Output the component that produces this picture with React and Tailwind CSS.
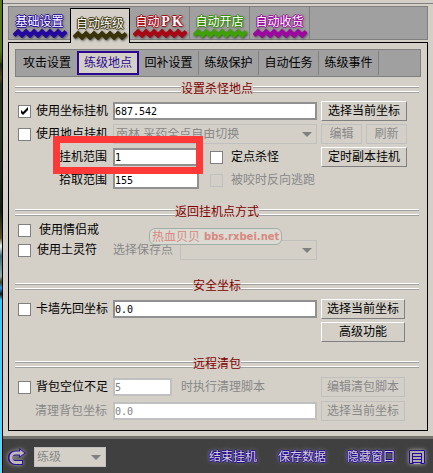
import { clsx } from 'clsx';

const mainTabs = [
  { name: '基础设置', color: 'text-[#2408a0]', outline: '[text-shadow:0_0_1px_#2408a0,1px_0_0_#2408a0,-1px_0_0_#2408a0,0_1px_0_#2408a0,0_-1px_0_#2408a0,1px_1px_3px_#303030]' },
  { name: '自动练级', color: 'text-[#3a3208]', outline: '[text-shadow:0_0_1px_#3a3208,1px_0_0_#3a3208,-1px_0_0_#3a3208,0_1px_0_#3a3208,0_-1px_0_#3a3208,1px_1px_3px_#606060]' },
  { name: '自动', letters: ['P', 'K'], color: 'text-[#a80814]', outline: '[text-shadow:0_0_1px_#a80814,1px_0_0_#a80814,-1px_0_0_#a80814,0_1px_0_#a80814,0_-1px_0_#a80814,1px_1px_3px_#303030]' },
  { name: '自动开店', color: 'text-[#40a008]', outline: '[text-shadow:0_0_1px_#389008,1px_0_0_#389008,-1px_0_0_#389008,0_1px_0_#389008,0_-1px_0_#389008,1px_1px_3px_#303030]' },
  { name: '自动收货', color: 'text-[#9c08a0]', outline: '[text-shadow:0_0_1px_#9c08a0,1px_0_0_#9c08a0,-1px_0_0_#9c08a0,0_1px_0_#9c08a0,0_-1px_0_#9c08a0,1px_1px_3px_#303030]' },
];

const subTabs = ['攻击设置', '练级地点', '回补设置', '练级保护', '自动任务', '练级事件'];

const footerLinks = ['结束挂机', '保存数据', '隐藏窗口'];

export default function App() {
  return (
    <div className="flex min-h-screen bg-[#d4d0c8] font-['Liberation_Sans','Noto_Sans_CJK_SC',sans-serif] text-xs leading-3 text-black">
      <GameEdge />
      <main className="flex min-w-0 flex-1 flex-col border-l border-black">
        <div className="h-1 border-b border-[#808080]" />
        <div className="px-[5px] pt-0.5">
          <MainTabs />
          <div className="mt-0.5 border border-black px-1.5 pt-1.5 pb-[9px]">
            <SubTabs />
            <HuntingSection />
            <ReturnSection />
            <SafeSection />
            <CleanSection />
          </div>
        </div>
        <Footer />
      </main>
    </div>
  );
}

// sliver of the game world left of the window
const GameEdge = () => (
  <aside className="w-0.5 shrink-0 bg-[linear-gradient(#5a7818_0px,#5a7818_50px,#3c5010_62px,#202818_64px,#504820_78px,#283018_84px,#283820_130px,#141c10_210px,#5a5020_238px,#e8f0f0_246px,#386870_256px,#90b0b0_276px,#403c18_282px,#28a0e8_288px,#101010_294px,#38c8f8_300px,#60d8f8_100%)]" />
);

const MainTabs = () => (
  <nav className="flex h-[34px] items-stretch border border-[#808080] bg-[#a0a0a0]">
    {mainTabs.map((tab, index) => (
      <button
        key={tab.name + index}
        className={clsx(
          'flex flex-col items-center pt-[9px]',
          index === 0 && 'w-[61px]',
          index === 1 && 'relative -mb-1 mt-px h-[35px] w-[60px] border-x border-t border-black bg-[#d4d0c8]',
          index > 1 && 'w-[60px] border-r border-[#808080]'
        )}
      >
        <span className={clsx('flex h-3 items-center text-white', tab.outline)}>
          {tab.name}
          {tab.letters?.map((letter) => (
            <b key={letter} className="w-3 text-center font-['Liberation_Serif',serif] text-sm leading-3">
              {letter}
            </b>
          ))}
        </span>
        <Zigzag className={tab.color} />
      </button>
    ))}
  </nav>
);

const Zigzag = ({ className }) => (
  <svg
    width="54"
    height="10"
    viewBox="0 0 54 10"
    className={clsx('shrink-0 drop-shadow-[1px_1px_1px_#505050]', className)}
  >
    <path
      d="M1 7.5L5 3.5L9 7.5L13 3.5L17 7.5L21 3.5L25 7.5L29 3.5L33 7.5L37 3.5L41 7.5L45 3.5L49 7.5L53 3.5"
      fill="none"
      stroke="currentColor"
      strokeWidth="4.2"
    />
  </svg>
);

const SubTabs = () => (
  <nav className="flex h-7 items-stretch border border-[#808080] bg-[#a0a0a0] py-px pl-px">
    {subTabs.map((name, index) => (
      <button
        key={name}
        className={clsx(
          index === 0 && 'w-[60px]',
          index === 1 && 'w-[62px] border-2 border-[#2a0890] bg-[#d4d0c8] text-[#2a0890]',
          index > 1 && 'w-[60px] border-r border-[#808080]'
        )}
      >
        {name}
      </button>
    ))}
  </nav>
);

const SectionTitle = ({ children, className }) => (
  <h2 className={clsx('flex h-3 items-center pr-0.5 text-[#800000]', className)}>
    <TitleLine />
    {children}
    <TitleLine />
  </h2>
);

const TitleLine = () => (
  <span className="flex flex-1 flex-col gap-[3px]">
    <span className="h-0.5 border-t border-b border-t-white border-b-[#a0a0a0]" />
    <span className="h-0.5 border-t border-b border-t-white border-b-[#a0a0a0]" />
  </span>
);

const Check = ({ label, className, disabled, ...props }) => (
  <label className={clsx('relative flex items-center whitespace-nowrap', disabled && 'text-[#888888]', className)}>
    <input
      type="checkbox"
      disabled={disabled}
      className="peer size-[13px] shrink-0 appearance-none border border-[#808080] bg-white disabled:border-[#c0c0c0] disabled:bg-transparent"
      {...props}
    />
    <svg viewBox="0 0 13 13" className="absolute left-0 hidden size-[13px] peer-checked:block">
      <path d="M3 5v3l2 2l5-5v-3l-5 5z" fill="black" />
    </svg>
    {label}
  </label>
);

const Field = ({ className, ...props }) => (
  <input
    type="text"
    className={clsx(
      "h-[18px] min-w-0 border-2 border-[#909090] bg-white font-['DejaVu_Sans_Mono',monospace] text-[10px] text-black disabled:border-[#c0c0c0] disabled:text-[#808080]",
      className
    )}
    {...props}
  />
);

const Select = ({ value, className, ...props }) => (
  <span className={clsx('relative flex h-5', className)}>
    <select
      disabled
      className="w-full appearance-none border border-[#c0c0c0] bg-[#d4d0c8] pl-0.5 text-[#888888] opacity-100"
      {...props}
    >
      <option>{value}</option>
    </select>
    <svg viewBox="0 0 10 5" className="absolute top-2 right-[5px] h-[5px] w-2.5">
      <path d="M0 0h10l-5 5z" fill="#808080" />
    </svg>
  </span>
);

const Button = ({ children, className, ...props }) => (
  <button
    className={clsx(
      'h-5 border border-t-white border-r-[#808080] border-b-[#808080] border-l-white whitespace-nowrap disabled:border-[#c0c0c0] disabled:text-[#888888]',
      className
    )}
    {...props}
  >
    {children}
  </button>
);

const HuntingSection = () => (
  <section>
    <SectionTitle className="mt-1.5">设置杀怪地点</SectionTitle>
    <div className="relative mt-1.5 grid grid-cols-[95px_1fr_86px] items-center gap-y-[3px] pr-3.5 pl-[3px]">
      <Check label="使用坐标挂机" className="gap-[5px]" defaultChecked />
      <Field defaultValue="687.542" aria-label="坐标" className="mr-1" />
      <Button>选择当前坐标</Button>

      <Check label="使用地点挂机" className="gap-[5px]" />
      <Select value="南林 采药全点自由切换" aria-label="地点" className="mr-1" />
      <div className="grid grid-cols-2 gap-1">
        <Button disabled>编辑</Button>
        <Button disabled>刷新</Button>
      </div>

      <label htmlFor="hunt-range" className="pr-1.5 text-right">
        挂机范围
      </label>
      <div className="flex items-center gap-[11px]">
        <Field id="hunt-range" defaultValue="1" className="w-[86px]" />
        <Check label="定点杀怪" className="gap-2" />
      </div>
      <Button>定时副本挂机</Button>

      <label htmlFor="pick-range" className="pr-1.5 text-right">
        拾取范围
      </label>
      <div className="flex h-5 items-center gap-[11px]">
        <Field id="pick-range" defaultValue="155" className="w-[86px]" />
        <Check label="被咬时反向逃跑" className="gap-2" disabled />
      </div>

      {/* highlight frame round the range field */}
      <div className="pointer-events-none absolute top-[35px] left-[38px] h-[38px] w-[150px] border-[7px] border-[#ff3838]" />
    </div>
  </section>
);

const ReturnSection = () => (
  <section className="relative">
    <SectionTitle className="mt-4">返回挂机点方式</SectionTitle>
    <div className="mt-0.5 grid grid-cols-[95px_1fr] items-center pr-[104px] pl-[3px]">
      <Check label="使用情侣戒" className="h-5 gap-2" />
      <span />
      <Check label="使用土灵符" className="h-5 gap-1.5" />
      <div className="flex items-center">
        <label htmlFor="save-point" className="w-[67px] shrink-0 text-[#888888]">
          选择保存点
        </label>
        <Select id="save-point" value="" className="flex-1" />
      </div>
    </div>
    <div className="pointer-events-none absolute top-[22px] left-[134px] flex h-[17px] items-center gap-1 rounded-md border border-[#a0b0a8] bg-[#dcdcd4]/90 px-0.5 whitespace-nowrap text-[#d88880]">
      <span>热血贝贝</span>
      <b className="font-['DejaVu_Sans',sans-serif] text-[10px]">bbs.rxbei.net</b>
    </div>
  </section>
);

const SafeSection = () => (
  <section>
    <SectionTitle className="mt-5">安全坐标</SectionTitle>
    <div className="mt-[7px] grid grid-cols-[95px_1fr_84px] items-center gap-y-[3px] pr-4 pl-[3px]">
      <Check label="卡墙先回坐标" className="gap-[5px]" />
      <Field defaultValue="0.0" aria-label="安全坐标" className="mr-1" />
      <Button>选择当前坐标</Button>
      <Button className="col-start-3">高级功能</Button>
    </div>
  </section>
);

const CleanSection = () => (
  <section>
    <SectionTitle className="mt-4">远程清包</SectionTitle>
    <div className="mt-[7px] grid grid-cols-[95px_1fr_84px] items-center gap-y-1 pr-4 pl-[3px]">
      <Check label="背包空位不足" className="gap-[5px]" />
      <div className="flex items-center gap-[9px] text-[#888888]">
        <Field defaultValue="5" aria-label="背包空位" className="w-[59px]" disabled />
        时执行清理脚本
      </div>
      <Button disabled>编辑清包脚本</Button>

      <label htmlFor="clean-pos" className="pr-1.5 text-right text-[#888888]">
        清理背包坐标
      </label>
      <Field id="clean-pos" defaultValue="0.0" className="mr-1" disabled />
      <Button disabled>选择当前坐标</Button>
    </div>
  </section>
);

const Footer = () => (
  <footer className="mt-[5px] flex flex-1 items-start border-t-[3px] border-[#74726c] bg-[#404040] px-[5px] pt-2">
    <button aria-label="返回" className="mr-2 drop-shadow-[0_0_2px_#b0a8a0]">
      <svg width="18" height="20" viewBox="0 0 18 20" fill="none" className="block">
        <path d="M12 6H7.5C0.5 6 0.5 15.5 7.5 15.5H15" stroke="#2810a0" strokeWidth="5" />
        <path d="M11 1L18 6L11 11Z" fill="#2810a0" />
        <path d="M13 6H7.5C1.5 6 1.5 15.5 7.5 15.5H14" stroke="#c0b8b4" strokeWidth="3" />
        <path d="M12 2.8L16.5 6L12 9.2Z" fill="#c0b8b4" />
      </svg>
    </button>
    <Select value="练级" aria-label="方案" className="w-[72px]" />
    <div className="flex h-5 flex-1 items-center justify-end gap-[21px] pr-0.5">
      {footerLinks.map((name) => (
        <button
          key={name}
          className="whitespace-nowrap text-[#d4d0c8] [text-shadow:1px_0_0_#2408a0,-1px_0_0_#2408a0,0_1px_0_#2408a0,0_-1px_0_#2408a0,0_0_4px_#c0c0c0]"
        >
          {name}
        </button>
      ))}
      <button aria-label="菜单" className="-ml-2 drop-shadow-[0_0_2px_#b0b0b0]">
        <svg width="18" height="16" viewBox="0 0 18 16" fill="none" className="block">
          <rect x="1" y="1" width="16" height="14" fill="#b0aca8" />
          <path
            d="M1.5 14.5V1.5H16.5V14.5H12.5M1.5 14.5H5.5M4 4.5H14M4.5 4V13M13.5 4V13M5 7.5H13M5 10.5H13M4 13.5H14"
            stroke="#2408a0"
          />
        </svg>
      </button>
    </div>
  </footer>
);
